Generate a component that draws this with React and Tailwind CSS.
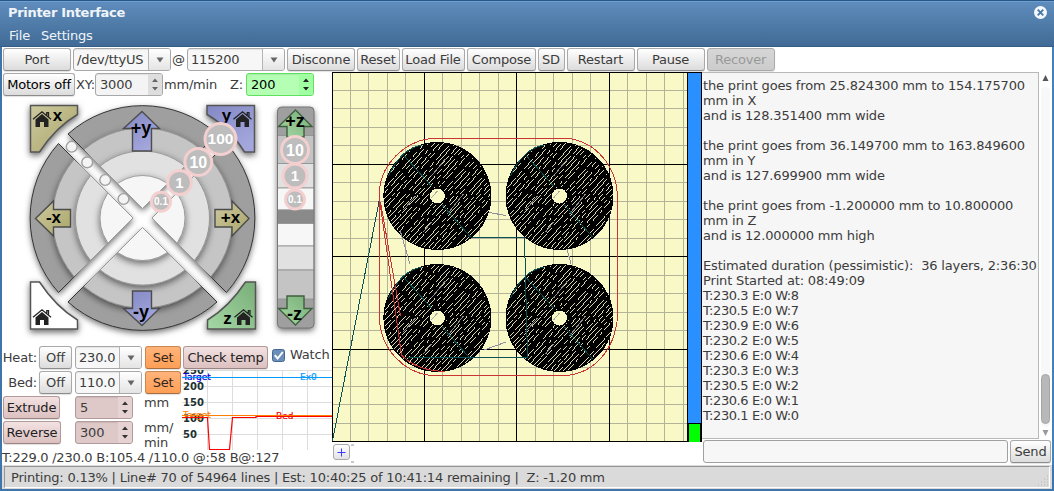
import React from "react";

const btn =
  "flex items-center justify-center overflow-hidden whitespace-nowrap h-[23px] rounded-[3px] border bg-linear-to-b shadow-[0_1px_1px_rgba(0,0,0,0.12)] shrink-0";
const tones = {
  plain: "border-[#a9a9a9] border-b-[#8c8c8c] from-[#ffffff] to-[#dcdcdc]",
  dark: "border-[#a9a9a9] border-b-[#8c8c8c] from-[#ffffff] to-[#dcdcdc] text-black",
  disabled: "border-[#a9a9a9] from-[#d6d6d6] to-[#cccccc] text-[#999]",
  pink: "border-[#b39a9a] border-b-[#9c8484] from-[#f3e2e2] to-[#dcc0c0] text-[#222]",
  orange: "border-[#c98850] border-b-[#a87040] from-[#ffb37a] to-[#ff9f55] text-[#33261c]",
};
const field =
  "flex items-center overflow-hidden whitespace-nowrap h-[23px] rounded-[3px] border shrink-0 shadow-[inset_0_1px_1px_rgba(0,0,0,0.08)]";

function Button({ tone = "plain", className = "", children }) {
  return <button className={btn + " " + tones[tone] + " " + className}>{children}</button>;
}

function Combo({ className = "", children }) {
  return (
    <div className={field + " border-[#a8a8a8] bg-[#f7f7f7] " + className}>
      <span className="flex-1 overflow-hidden pl-[3px]">{children}</span>
      <span className="flex h-full w-[22px] shrink-0 items-center justify-center border-l border-[#b5b5b5] bg-linear-to-b from-white to-[#e4e4e4]">
        <svg width="8" height="6" viewBox="0 0 8 6">
          <path d="M0.5 0.5H7.5L4 5.5Z" fill="#666" />
        </svg>
      </span>
    </div>
  );
}

function Spin({ className = "", side = "", ink = "#444", children }) {
  return (
    <div className={field + " " + className}>
      <span className="flex-1 overflow-hidden pl-[4px]">{children}</span>
      <span className={"flex h-full w-[14px] items-center justify-center " + side}>
        <svg width="6" height="13" viewBox="0 0 6 13">
          <path d="M0 4H6L3 0.5ZM0 9H6L3 12.5Z" fill={ink} />
        </svg>
      </span>
    </div>
  );
}

function House({ x, y }) {
  return (
    <g transform={`translate(${x} ${y})`}>
      <path d="M3 8.5L9.5 3L16 8.5V16H11.5V11H7.5V16H3Z" fill="#222" />
      <path d="M0.5 8.2L9.5 0.8L18.5 8.2M14.3 4V1.6H16V5.6" fill="none" stroke="#222" strokeWidth="1.3" />
    </g>
  );
}

const CX = 140.5;
const CY = 121;
const SECTOR = `M${CX} ${CY - 9.5}L${CX - 74.5} ${CY - 84}A112 112 0 0 1 ${CX + 74.5} ${CY - 84}Z`;

function Sector({ angle }) {
  return (
    <g>
      <g clipPath={`url(#sector${angle})`}>
        <circle cx={CX} cy={CY} r="112" fill="#9f9f9f" />
        <circle cx={CX} cy={CY} r="90" fill="#c5c5c5" stroke="#8d8d8d" strokeWidth="0.8" filter="url(#ring)" />
        <circle cx={CX} cy={CY} r="67" fill="#e1e1e1" stroke="#8d8d8d" strokeWidth="0.8" filter="url(#ring)" />
        <circle cx={CX} cy={CY} r="42.5" fill="#f6f6f6" stroke="#8d8d8d" strokeWidth="0.8" filter="url(#ring)" />
      </g>
      <path d={SECTOR} transform={`rotate(${angle} ${CX} ${CY})`} fill="none" stroke="url(#edge)" strokeWidth="1" />
    </g>
  );
}

function Badge({ x, y, r, size, children }) {
  return (
    <g>
      <circle cx={x} cy={y} r={r - 1.5} fill="#bdbdbd" stroke="#f3cfcf" strokeWidth="3" />
      <text x={x} y={y + size * 0.35} textAnchor="middle" fontSize={size} fontWeight="bold" fill="#fff">
        {children}
      </text>
    </g>
  );
}

function JogPanel() {
  const angles = [0, 90, 180, 270];
  const zones = [
    [38.5, 28, "#c4c4c4"], [66.5, 24.5, "#e1e1e1"], [91, 22, "#f7f7f7"], [113, 13.5, "#8a8a8a"],
    [126.5, 22.5, "#f7f7f7"], [149, 24, "#e1e1e1"], [173, 29, "#c4c4c4"],
  ];
  return (
    <svg width="330" height="247" viewBox="0 0 330 247" className="block shrink-0 tracking-normal" style={{ fontFamily: '"Liberation Sans", Arial, sans-serif' }}>
      <defs>
        <filter id="drop" x="-20%" y="-20%" width="140%" height="150%">
          <feDropShadow dx="0" dy="2.5" stdDeviation="3" floodColor="#000" floodOpacity="0.6" />
        </filter>
        <filter id="ring" x="-20%" y="-20%" width="140%" height="140%">
          <feDropShadow dx="0" dy="2.5" stdDeviation="3.5" floodColor="#000" floodOpacity="0.55" />
        </filter>
        <radialGradient id="edge" gradientUnits="userSpaceOnUse" cx={CX} cy={CY} r="112">
          <stop offset="0.7" stopColor="#999" />
          <stop offset="0.85" stopColor="#333" />
        </radialGradient>
        <linearGradient id="gold" x1="0" y1="0" x2="1" y2="1"><stop offset="0" stopColor="#cdc9a0" /><stop offset="1" stopColor="#aaa568" /></linearGradient>
        <linearGradient id="blue" x1="0" y1="0" x2="0.6" y2="1"><stop offset="0" stopColor="#8388c4" /><stop offset="1" stopColor="#a3a7dc" /></linearGradient>
        <linearGradient id="green" x1="1" y1="0" x2="0" y2="1"><stop offset="0" stopColor="#78ad78" /><stop offset="1" stopColor="#a4d8a4" /></linearGradient>
        {angles.map((a) => (
          <clipPath id={`sector${a}`} key={a}>
            <path d={SECTOR} transform={`rotate(${a} ${CX} ${CY})`} />
          </clipPath>
        ))}
      </defs>
      <g filter="url(#drop)">
        {angles.map((a) => (
          <path key={a} d={SECTOR} transform={`rotate(${a} ${CX} ${CY})`} fill="#9f9f9f" />
        ))}
      </g>
      {angles.map((a) => <Sector key={a} angle={a} />)}
      <g fill="#f4f4f4" stroke="#a0a0a0" strokeWidth="1.4">
        <circle cx="69.7" cy="49.7" r="5.4" />
        <circle cx="85.2" cy="65.4" r="5.4" />
        <circle cx="103.2" cy="83" r="5.4" />
        <circle cx="121.5" cy="102" r="5.4" />
      </g>
      <g stroke="#555" strokeWidth="1.5" filter="url(#drop)">
        <path d="M28.5 8.5H75.5V17.5Q54 30 37.5 55H28.5Z" fill="url(#gold)" />
        <path d="M205 8.5H252.5V55H242.5Q227 30 205 17.5Z" fill="url(#blue)" />
        <path d="M28.5 185H37.5Q54 210 75.5 223V232H28.5Z" fill="#fff" />
        <path d="M253.5 185H243.5Q227 210 205.5 223V232H253.5Z" fill="url(#green)" />
      </g>
      <House x={30.5} y={14} />
      <House x={231} y={14} />
      <House x={30.5} y={212} />
      <House x={232} y={212} />
      <g stroke="#4c4c4c" strokeWidth="1.4">
        <path d="M140 14.5L157.5 31.5H149.5V54H130.5V31.5H121.5Z" fill="url(#blue)" />
        <path d="M140 228.5L157.5 211.5H149.5V194H130.5V211.5H121.5Z" fill="url(#blue)" />
        <path d="M33.5 121.5L51.5 104V112.5H68.5V130H51.5V139Z" fill="url(#gold)" />
        <path d="M247 121.5L230 104V112.5H213V130H230V139Z" fill="url(#gold)" />
      </g>
      <g fontWeight="bold" fill="#000" textAnchor="middle">
        <text x="55.5" y="24" fontSize="17">x</text>
        <text x="224.5" y="24" fontSize="17">y</text>
        <text x="225.5" y="227" fontSize="17">z</text>
        <text x="139" y="37" fontSize="18">+y</text>
        <text x="139" y="221" fontSize="18">-y</text>
        <text x="51.5" y="126" fontSize="17">-x</text>
        <text x="228.5" y="126" fontSize="17">+x</text>
      </g>
      <Badge x={218.5} y={42} r={17} size={15.5}>100</Badge>
      <Badge x={196.3} y={65} r={15} size={16}>10</Badge>
      <Badge x={177.5} y={85.5} r={13.5} size={15}>1</Badge>
      <Badge x={159} y={104.8} r={11} size={10}>0.1</Badge>
      <g filter="url(#drop)">
        <rect x="275.5" y="10" width="36.5" height="221" rx="4" fill="#9f9f9f" />
      </g>
      {zones.map(([y, h, c]) => (
        <rect key={y} x="275.5" y={y} width="36.5" height={h} fill={c} stroke="#8e8e8e" strokeWidth="0.8" />
      ))}
      <rect x="275.5" y="10" width="36.5" height="221" rx="4" fill="none" stroke="#777" />
      <g stroke="#3f5f3f" strokeWidth="1.4" fill="url(#green)">
        <path d="M293.5 13L310 29.5H302V40H285V29.5H276.5Z" />
        <path d="M293.5 228L310 211.5H302V199H285V211.5H276.5Z" />
      </g>
      <g fontWeight="bold" textAnchor="middle" fontSize="18">
        <text x="293" y="29.5">+z</text>
        <text x="292.5" y="222.5">-z</text>
      </g>
      <Badge x={293} y={53} r={15} size={16}>10</Badge>
      <Badge x={293} y={79} r={13.5} size={15}>1</Badge>
      <Badge x={293} y={102.5} r={11} size={10}>0.1</Badge>
    </svg>
  );
}

function TempGraph() {
  return (
    <svg width="150" height="80" viewBox="0 0 150 80" className="block shrink-0 tracking-normal" style={{ fontFamily: '"DejaVu Sans", sans-serif' }}>
      <g stroke="#dddddd" shapeRendering="crispEdges">
        {[25.5, 50.5, 75.5, 100.5, 125.5].map((x) => <path key={x} d={`M${x} 0V80`} />)}
        {[0.5, 16.5, 32.5, 48.5, 64.5].map((y) => <path key={y} d={`M0 ${y}H150`} />)}
      </g>
      <g fontSize="10" fontWeight="bold" fill="#1d3232">
        <text x="1" y="4">250</text>
        <text x="1" y="20">200</text>
        <text x="1" y="36">150</text>
        <text x="1" y="52">100</text>
        <text x="1" y="68">50</text>
      </g>
      <g fontSize="9" strokeWidth="0.2">
        <text x="1" y="10" fill="#0000e0" stroke="#0000e0">Target</text>
        <text x="118" y="10" fill="#0099ff" stroke="#0099ff">Ex0</text>
        <text x="1" y="48" fill="#ff8000" stroke="#ff8000">Target</text>
        <text x="94" y="49" fill="#ee0000" stroke="#ee0000">Bed</text>
      </g>
      <g fill="none" strokeWidth="1.2">
        <path d="M0 7.5H29" stroke="#0000e0" />
        <path d="M0 7.5H150" stroke="#0099ff" />
        <path d="M0 45.5H150" stroke="#ff8000" />
        <path d="M0 47.5H25.5L27.5 79.5H47.5L50.5 47.5H74V46.5H150" stroke="#ff0000" />
      </g>
    </svg>
  );
}

const DISCS = [[105.4, 124], [227.5, 124], [105.4, 246], [227.5, 246]];

function hatch(cx, cy) {
  const out = [];
  const steps = [4, 5, 4, 8, 4, 5, 5, 4, 7, 4, 5, 4];
  const a = Math.PI * 0.268;
  const ux = Math.cos(a), uy = -Math.sin(a);
  let o = -78;
  let i = 0;
  while (o < 80) {
    const d = o * 0.78;
    if (Math.abs(d) < 52) {
      const h = Math.sqrt(53 * 53 - d * d);
      const mx = cx - d * uy, my = cy + d * ux;
      out.push([mx - ux * h, my - uy * h, mx + ux * h, my + uy * h, i]);
    }
    o += steps[i % steps.length];
    i++;
  }
  return out;
}

function Plate() {
  const ticks = Array.from({ length: 20 }, (_, k) => k);
  const dash = ["13 2 7 4", "6 3 18 5", "22 4 5 4", "9 2 4 3"];
  return (
    <svg width="370" height="370" viewBox="0 0 370 370" className="block shrink-0">
      <rect width="356" height="370" fill="#f9f9c8" />
      <g shapeRendering="crispEdges">
        {ticks.map((k) => {
          const p = Math.floor(k * 18.48) + 0.5;
          return k % 5 ? <path key={k} d={`M${p} 0V370M0 ${p}H356`} stroke="#b3b399" /> : null;
        })}
        {ticks.map((k) => {
          const p = Math.floor(k * 18.48) + 0.5;
          return k % 5 ? null : <path key={k} d={`M${p} 0V370M0 ${p}H356`} stroke="#000" />;
        })}
        <path d="M0 369.5H356" stroke="#000" />
        {DISCS.map(([x, y]) => (
          <g key={x + "-" + y}>
            <circle cx={x} cy={y} r="54" fill="#000" />
            {hatch(x, y).map(([x1, y1, x2, y2, i]) => (
              <path key={i} d={`M${x1} ${y1}L${x2} ${y2}`} stroke="#f3f3c2" strokeWidth="0.9" strokeDasharray={dash[i % 4]} />
            ))}
            <path d={`M${x - 6} ${y - 20}l14 -17M${x - 34} ${y + 14}l12 -14M${x + 10} ${y + 18}l16 -20M${x - 14} ${y + 36}l8 -10`} stroke="#8f8f8f" fill="none" />
            <path d={`M${x - 33} ${y - 40}L${x - 6} ${y - 10}M${x + 5} ${y + 9}L${x + 33} ${y + 41}M${x - 49} ${y - 20}Q${x - 36} ${y - 48} ${x - 15} ${y - 51}`} stroke="#0d5252" fill="none" />
            <circle cx={x} cy={y} r="9" fill="#000" />
            <circle cx={x} cy={y} r="7.5" fill="#f9f9c8" />
            <path d={`M${x - 6} ${y + 2}l6 -7`} stroke="#aaa" />
          </g>
        ))}
        <path d="M157 140.5L174 143.5M68 158L78 192M235 177L239 192M152 278L174 270" fill="none" stroke="#8f8f9f" />
        <path d="M0.5 369L47.5 127M140 165.5H192.5L195.5 285.5H76" fill="none" stroke="#0d5252" />
        <g fill="none" stroke="#cc3333">
          <path d="M98 66.5H237C262 70 285 92 285.5 126V246C282 279 262 301 234 303.5H98C72 300 49 278 47.5 247V117C50 92 72 70 98 66.5Z" />
          <path d="M47.5 127L69.5 283C80 294 96 299 113 299.5M48.5 130L68.5 244" />
        </g>
        <rect x="355" y="0" width="15" height="370" fill="#000" />
        <rect x="356" y="1" width="13" height="350" fill="#2b90ff" />
        <rect x="357" y="352" width="11" height="18" fill="#00ff00" />
      </g>
    </svg>
  );
}

const REPORT = [
  "the print goes from 25.824300 mm to 154.175700", "mm in X", "and is 128.351400 mm wide", "",
  "the print goes from 36.149700 mm to 163.849600", "mm in Y", "and is 127.699900 mm wide", "",
  "the print goes from -1.200000 mm to 10.800000", "mm in Z", "and is 12.000000 mm high", "",
  "Estimated duration (pessimistic):  36 layers, 2:36:30", "Print Started at: 08:49:09",
];
const READINGS = [
  "T:230.3 E:0 W:8", "T:230.5 E:0 W:7", "T:230.9 E:0 W:6", "T:230.2 E:0 W:5", "T:230.6 E:0 W:4",
  "T:230.3 E:0 W:3", "T:230.5 E:0 W:2", "T:230.6 E:0 W:1", "T:230.1 E:0 W:0",
];

const pinkField = "bg-[#dfc8c8] border-[#b09a9a]";

export default function App() {
  return (
    <div className="flex h-[491px] w-[1054px] flex-col overflow-hidden bg-white font-['DejaVu_Sans',sans-serif] text-[13px] leading-[15px] tracking-[-0.2px] text-[#3c3c3c]">
      <header className="flex h-[47px] shrink-0 flex-col border-t border-b border-t-[#2c557f] border-b-[#355d85] bg-linear-to-b from-[#5f8dbd] to-[#416b96] text-[#f0f4f8] shadow-[inset_0_1px_0_#6aa0d8]">
        <div className="flex h-[23px] items-center justify-between pr-[7px] pl-[8px] font-bold tracking-[-0.3px]">
          <span>Printer Interface</span>
          <svg width="13" height="13" viewBox="0 0 13 13">
            <circle cx="6.5" cy="6.5" r="6.5" fill="#f4f8fc" />
            <path d="M3.7 3.7L9.3 9.3M9.3 3.7L3.7 9.3" stroke="#4a78a8" strokeWidth="1.9" />
          </svg>
        </div>
        <nav className="flex h-[22px] items-center gap-[11px] pl-[9px]">
          <span>File</span>
          <span>Settings</span>
        </nav>
      </header>

      <div className="flex h-[418px] shrink-0 flex-col border-x-2 border-l-[#3f75ab] border-r-[#4680bb]">
        <div className="flex h-[25px] shrink-0 items-start gap-[2px] pt-px pl-px">
          <Button className="w-[68px]">Port</Button>
          <Combo className="w-[98px]">/dev/ttyUS</Combo>
          <span className="mt-[4px] -ml-px w-[13px]">@</span>
          <Combo className="w-[98px]">115200</Combo>
          <Button className="w-[68px]">Disconne</Button>
          <Button className="w-[43px] pr-px">Reset</Button>
          <Button className="w-[63px] pr-px">Load File</Button>
          <Button className="w-[69px]">Compose</Button>
          <Button className="w-[27px] pr-px">SD</Button>
          <Button className="w-[68px] pr-px">Restart</Button>
          <Button className="w-[68px] pr-px">Pause</Button>
          <Button tone="disabled" className="w-[68px] pr-px">Recover</Button>
        </div>

        <div className="flex h-[393px] shrink-0">
          <section className="flex w-[330px] shrink-0 flex-col">
            <div className="mb-px flex h-[24px] shrink-0 items-start pt-px pl-px">
              <Button tone="dark" className="w-[72px]">Motors off</Button>
              <span className="mt-[4px] w-[20px] pl-px whitespace-nowrap">XY:</span>
              <Spin className="w-[68px] border-[#a8a8a8] bg-[#f4f4f4]" side="bg-[#dedede]" ink="#666">3000</Spin>
              <span className="mt-[4px] w-[67px] pl-px">mm/min</span>
              <span className="mt-[4px] w-[16px]">Z:</span>
              <Spin className="w-[68px] border-[#5fe05f] bg-[#b4ffb4] text-black" side="bg-[#a0ffa0]" ink="#222">200</Spin>
            </div>
            <JogPanel />
            <div className="flex h-[106px] shrink-0">
              <div className="flex w-[180px] shrink-0 flex-col gap-[2px] pt-[2px]">
                <div className="flex items-center">
                  <span className="w-[37px] pr-[2px] text-right">Heat:</span>
                  <Button className="mr-[3px] w-[33px]">Off</Button>
                  <Combo className="mr-[3px] w-[67px]">230.0</Combo>
                  <Button tone="orange" className="w-[36px]">Set</Button>
                </div>
                <div className="flex items-center">
                  <span className="w-[37px] pr-[2px] text-right">Bed:</span>
                  <Button className="mr-[3px] w-[33px]">Off</Button>
                  <Combo className="mr-[3px] w-[67px]">110.0</Combo>
                  <Button tone="orange" className="w-[36px]">Set</Button>
                </div>
                <div className="flex h-[23px] items-center pl-px">
                  <Button tone="pink" className="mr-[15px] w-[57px]">Extrude</Button>
                  <Spin className={"w-[58px] " + pinkField} side="bg-[#e6d2d2]" ink="#333">5</Spin>
                  <span className="pb-[10px] pl-[11px]">mm</span>
                </div>
                <div className="flex h-[23px] items-center pl-px">
                  <Button tone="pink" className="mr-[14px] w-[58px]">Reverse</Button>
                  <Spin className={"w-[58px] " + pinkField} side="bg-[#e6d2d2]" ink="#333">300</Spin>
                  <span className="pt-[5px] pl-[11px]">mm/<br />min</span>
                </div>
              </div>
              <div className="flex w-[150px] flex-col">
                <div className="flex h-[26px] shrink-0 items-start pt-[2px] pl-px">
                  <Button tone="pink" className="w-[85px]">Check temp</Button>
                  <svg width="13" height="13" viewBox="0 0 13 13" className="mt-[3px] mr-[5px] ml-[4px] shrink-0">
                    <rect x="0.5" y="0.5" width="12" height="12" rx="2" fill="#6b8fb8" stroke="#456a92" />
                    <path d="M2.8 6.2L5.6 9.5L10.8 3" fill="none" stroke="#fff" strokeWidth="2" />
                  </svg>
                  <span className="mt-px">Watch</span>
                </div>
                <TempGraph />
              </div>
            </div>
            <div className="h-[15px] tracking-[-0.25px] whitespace-pre">T:229.0 /230.0 B:105.4 /110.0 @:58 B@:127</div>
          </section>

          <section className="flex w-[370px] shrink-0 flex-col">
            <Plate />
            <div className="flex items-start pt-[2px] pl-px">
              <button className="flex h-[16px] w-[17px] items-center justify-center rounded-[3px] border border-[#a9a9a9] bg-linear-to-b from-white to-[#e2e2e2]">
                <svg width="9" height="9" viewBox="0 0 9 9"><path d="M4.5 0.5V8.5M0.5 4.5H8.5" stroke="#3a3aff" /></svg>
              </button>
              <span className="ml-px flex h-[19px] flex-col justify-between">
                <i className="block h-[2px] w-[3px] bg-[#c8c8c8]" />
                <i className="block h-[2px] w-[3px] bg-[#c8c8c8]" />
              </span>
            </div>
          </section>

          <section className="flex w-[350px] shrink-0 flex-col">
            <div className="flex h-[367px] shrink-0">
              <div className="w-[337px] shrink-0 border border-l-0 border-[#b8b8b8] bg-[#f6f6f6] pt-[5px] pl-px">
                {REPORT.map((line, i) => (
                  <p key={i} className="h-[15px] tracking-[-0.16px] whitespace-pre">{line}</p>
                ))}
                {READINGS.map((line) => (
                  <p key={line} className="h-[15px] tracking-[-0.42px] whitespace-pre">{line}</p>
                ))}
              </div>
              <div className="flex w-[13px] flex-col items-center pt-[3px] pb-[3px]">
                <svg width="7" height="6" viewBox="0 0 7 6"><path d="M0.5 6H6.5L3.5 0Z" fill="#555" /></svg>
                <div className="mt-[6px] flex w-[9px] flex-1 flex-col justify-end rounded-full bg-[#f8f8f8] pb-[3px]">
                  <div className="h-[50px] rounded-full border border-[#a5a5a5] bg-[#b8b8b8]" />
                </div>
                <svg width="7" height="6" viewBox="0 0 7 6" className="mt-[3px]"><path d="M0.5 0H6.5L3.5 6Z" fill="#999" /></svg>
              </div>
            </div>
            <div className="flex gap-[2px] pt-px pl-px">
              <input className="h-[23px] w-[305px] rounded-[3px] border border-[#a0a0a0] bg-[#f7f7f7]" />
              <Button className="w-[41px]">Send</Button>
            </div>
          </section>
        </div>
      </div>

      <footer className="h-[26px] shrink-0 border-x-2 border-b-2 border-x-[#3f75ab] border-b-[#3f75ab] bg-[#dadada] pt-px pr-[2px] pl-[2px]">
        <div className="flex h-[22px] items-center border border-[#959595] border-r-white border-b-white pl-[6px] tracking-[-0.21px] whitespace-pre">
          <span className="flex-1">Printing: 0.13% | Line# 70 of 54964 lines | Est: 10:40:25 of 10:41:14 remaining |  Z: -1.20 mm</span>
          <svg width="12" height="12" viewBox="0 0 12 12" className="self-end">
            <path d="M10 1h1M7 4h1M10 4h1M4 7h1M7 7h1M10 7h1M1 10h1M4 10h1M7 10h1M10 10h1" stroke="#b5b5b5" />
          </svg>
        </div>
      </footer>
    </div>
  );
}
